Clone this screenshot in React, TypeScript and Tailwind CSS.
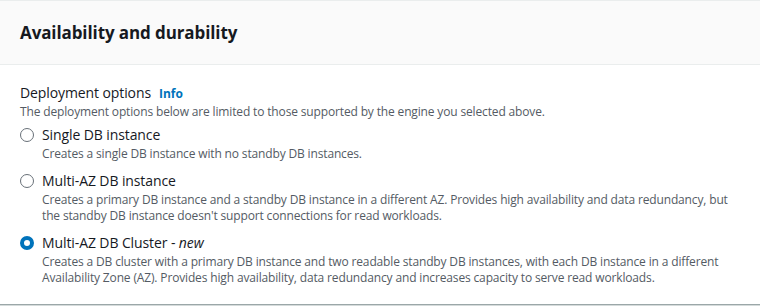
const OPTIONS = [
  {
    id: "single",
    label: "Single DB instance",
    desc: "Creates a single DB instance with no standby DB instances.",
  },
  {
    id: "multi-instance",
    label: "Multi-AZ DB instance",
    desc: "Creates a primary DB instance and a standby DB instance in a different AZ. Provides high availability and data redundancy, but the standby DB instance doesn't support connections for read workloads.",
  },
  {
    id: "multi-cluster",
    label: "Multi-AZ DB Cluster",
    isNew: true,
    desc: "Creates a DB cluster with a primary DB instance and two readable standby DB instances, with each DB instance in a different Availability Zone (AZ). Provides high availability, data redundancy and increases capacity to serve read workloads.",
  },
];

function Radio({ checked }: { checked: boolean }) {
  return checked ? (
    <span className="mt-[4px] h-[14px] w-[14px] shrink-0 rounded-full border-[4px] border-[#0073bb] bg-white" />
  ) : (
    <span className="mt-[4px] h-[14px] w-[14px] shrink-0 rounded-full border-[1.5px] border-[#687078] bg-white" />
  );
}

export default function App() {
  const selected = "multi-cluster";
  return (
    <div className="w-[760px] h-[307px] bg-white font-['Open_Sans',sans-serif] text-[#16191f]">
      <div className="border-t border-[#eaeded] border-b border-b-[#9ba7a8] shadow-[0_1px_0_#d5dbdb]">
        {/* header */}
        <div className="h-[64px] bg-[#fafafa] border-b border-[#eaeded] px-5 flex items-center">
          <h2 className="text-[17px] font-bold leading-[22px] tracking-[-0.1px]">Availability and durability</h2>
        </div>

        {/* body */}
        <div className="px-5 pt-[17px] pb-[18px]">
          <div className="flex items-baseline gap-2">
            <span className="text-[14px] leading-[22px] tracking-[-0.1px]">Deployment options</span>
            <a className="text-[12px] font-bold text-[#0073bb]">Info</a>
          </div>
          <p className="text-[12px] leading-4 tracking-[-0.15px] text-[#545b64]">
            The deployment options below are limited to those supported by the engine you selected above.
          </p>

          <div className="mt-[4px] flex flex-col gap-[8px]">
            {OPTIONS.map((o) => (
              <label key={o.id} className="flex gap-2">
                <Radio checked={o.id === selected} />
                <div>
                  <div className="text-[14px] leading-[22px] tracking-[-0.1px]">
                    {o.label}
                    {o.isNew && (
                      <>
                        {" - "}
                        <i>new</i>
                      </>
                    )}
                  </div>
                  <p className="text-[12px] leading-4 tracking-[-0.15px] text-[#545b64]">{o.desc}</p>
                </div>
              </label>
            ))}
          </div>
        </div>
      </div>
    </div>
  );
}
